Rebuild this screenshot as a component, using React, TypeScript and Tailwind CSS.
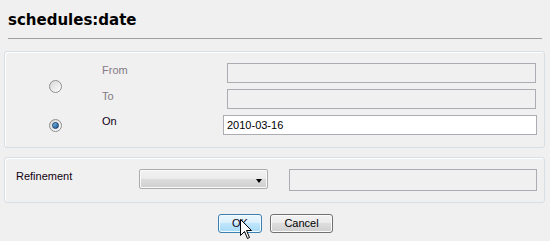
import React from "react";

function Radio({ checked }: { checked?: boolean }) {
  return (
    <div className="w-[13px] h-[13px] rounded-full border border-[#8e8f8f] bg-gradient-to-br from-[#d8d8d8] to-[#fdfdfd] flex items-center justify-center">
      {checked && (
        <div className="w-[7px] h-[7px] rounded-full border border-[#1b3f66] bg-gradient-to-br from-[#7cc3f0] to-[#17538f]" />
      )}
    </div>
  );
}

function Field({ white, className }: { white?: boolean; className: string }) {
  return (
    <div
      className={
        "border border-[#abadb3] " + (white ? "bg-white" : "bg-[#f0f0f0]") + " " + className
      }
    />
  );
}

function Cursor() {
  return (
    <svg
      className="absolute left-[240px] top-[219px]"
      width="13"
      height="21"
      viewBox="0 0 13 21"
    >
      <path
        d="M0.5 0.5 L0.5 16.5 L4.5 12.5 L7.5 19.5 L9.5 18.5 L6.5 11.5 L11.5 11.5 Z"
        fill="#fff"
        stroke="#000"
        strokeWidth="1"
        strokeLinejoin="miter"
      />
    </svg>
  );
}

export default function App() {
  return (
    <div
      className="relative w-[550px] h-[241px] bg-[#f0f0f0] overflow-hidden text-[11px] leading-[13px]"
      style={{ fontFamily: '"Liberation Sans", Arial, sans-serif' }}
    >
      <h1
        className="pl-[8px] pt-[11px] text-[15px] leading-[18px] font-bold text-black"
        style={{ fontFamily: '"DejaVu Sans", Verdana, sans-serif' }}
      >
        schedules:date
      </h1>
      <div className="mt-[9px] ml-[8px] w-[534px] h-px bg-[#a0a0a0]" />

      <div className="mt-[12px] ml-[4px] w-[541px] h-[97px] rounded-[3px] border border-[#d5dfe5] shadow-[inset_1px_1px_0_#ffffff] pt-[11px]">
        <div className="grid grid-cols-[97px_121px_1fr] grid-rows-[20px_20px_20px] gap-y-[6px]">
          <div className="row-span-2 flex items-center pl-[44px]">
            <Radio />
          </div>
          <div className="pt-[1px] text-[#857a85]">From</div>
          <Field className="ml-[4px] w-[309px] h-[20px]" />
          <div className="pt-[1px] text-[#857a85]">To</div>
          <Field className="ml-[4px] w-[309px] h-[20px]" />
          <div className="flex items-center pl-[44px]">
            <Radio checked />
          </div>
          <div className="pt-0 text-[#120012]">On</div>
          <div className="w-[314px] h-[20px] border border-[#abadb3] bg-white pl-[3px] pt-[3px] text-black">
            2010-03-16
          </div>
        </div>
      </div>

      <div className="mt-[9px] ml-[4px] w-[541px] h-[46px] rounded-[3px] border border-[#d5dfe5] shadow-[inset_1px_1px_0_#ffffff] pt-[11px] pl-[11px] flex items-start">
        <div className="w-[123px] pt-[1px] text-[#120012]">Refinement</div>
        <div className="relative w-[129px] h-[20px] border border-[#acacac] rounded-[2px] bg-[linear-gradient(#f2f2f2_0%,#ebebeb_50%,#dddddd_50%,#cfcfcf_100%)] shadow-[inset_0_0_0_1px_#fafafa]">
          <div className="absolute right-[5px] top-[9px] w-0 h-0 border-l-[3.5px] border-r-[3.5px] border-t-[4px] border-l-transparent border-r-transparent border-t-black" />
        </div>
        <Field className="ml-[21px] w-[248px] h-[22px]" />
      </div>

      <div className="mt-[11px] flex justify-center gap-[8px] pl-[1px]">
        <button className="w-[44px] h-[19px] rounded-[3px] border border-[#3c7fb1] bg-[linear-gradient(#eaf6fd_0%,#d9f0fc_50%,#bee6fd_50%,#a7d9f5_100%)] shadow-[inset_0_0_0_1px_#f4fbff] text-[11px] leading-[13px] text-[#120012]">
          OK
        </button>
        <button className="w-[63px] h-[19px] rounded-[3px] border border-[#707070] bg-[linear-gradient(#f2f2f2_0%,#ebebeb_50%,#dddddd_50%,#cfcfcf_100%)] shadow-[inset_0_0_0_1px_#fcfcfc] text-[11px] leading-[13px] text-black">
          Cancel
        </button>
      </div>

      <Cursor />
    </div>
  );
}
